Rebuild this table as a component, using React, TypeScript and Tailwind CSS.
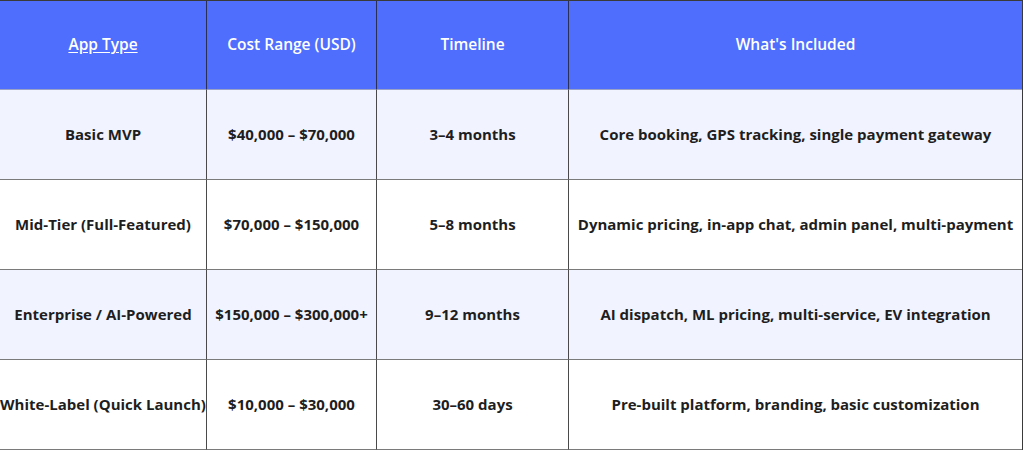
import React from "react";

const rows = [
  ["Basic MVP", "$40,000 – $70,000", "3–4 months", "Core booking, GPS tracking, single payment gateway"],
  ["Mid-Tier (Full-Featured)", "$70,000 – $150,000", "5–8 months", "Dynamic pricing, in-app chat, admin panel, multi-payment"],
  ["Enterprise / AI-Powered", "$150,000 – $300,000+", "9–12 months", "AI dispatch, ML pricing, multi-service, EV integration"],
  ["White-Label (Quick Launch)", "$10,000 – $30,000", "30–60 days", "Pre-built platform, branding, basic customization"],
];

export default function App() {
  return (
    <div className="w-[1024px] h-[451px] bg-white overflow-hidden" style={{ fontFamily: "'Open Sans', 'Noto Sans', sans-serif" }}>
      <div className="grid grid-cols-[207px_170px_192px_453px] w-[1023px] border-t border-r border-[#3a3a3a]">
        <div className="h-[89px] bg-[#4f6efd] border-r border-[#2a2f55] border-b border-b-[#9aa3c7] flex items-center justify-center text-white text-[15.5px] font-semibold">
          <span className="underline underline-offset-2">App Type</span>
        </div>
        <div className="h-[89px] bg-[#4f6efd] border-r border-[#2a2f55] border-b border-b-[#9aa3c7] flex items-center justify-center text-white text-[15.5px] font-semibold">
          Cost Range (USD)
        </div>
        <div className="h-[89px] bg-[#4f6efd] border-r border-[#2a2f55] border-b border-b-[#9aa3c7] flex items-center justify-center text-white text-[15.5px] font-semibold">
          Timeline
        </div>
        <div className="h-[89px] bg-[#4f6efd] border-b border-b-[#9aa3c7] flex items-center justify-center text-white text-[15.5px] font-semibold">
          What's Included
        </div>
        {rows.map((r, i) => (
          <React.Fragment key={i}>
            {r.map((c, j) => (
              <div
                key={j}
                className={`h-[90px] flex items-center justify-center whitespace-nowrap text-[15px] font-bold text-[#1e1e1e] border-b border-[#7a7a7a] ${j < 3 ? "border-r border-r-[#4a4a4a]" : ""} ${i % 2 === 0 ? "bg-[#f1f3ff]" : "bg-white"}`}
              >
                {c}
              </div>
            ))}
          </React.Fragment>
        ))}
      </div>
    </div>
  );
}
